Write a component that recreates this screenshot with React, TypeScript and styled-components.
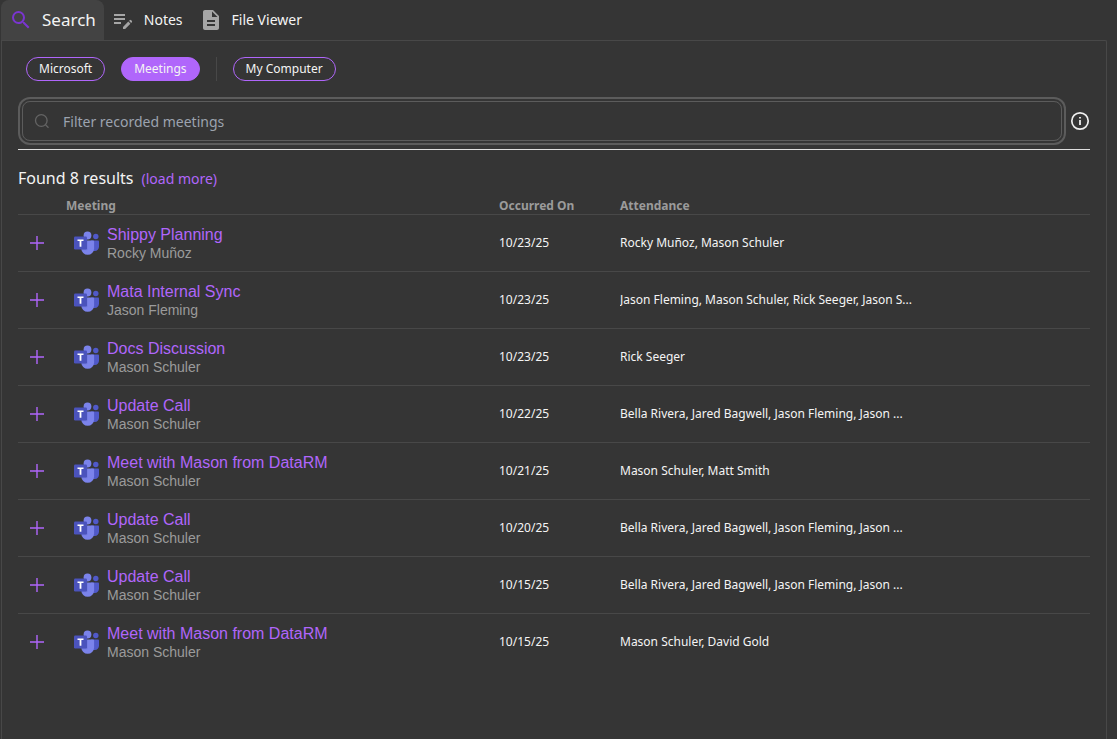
import React from "react";
import styled, { createGlobalStyle } from "styled-components";

const color = {
  page: "#353535",
  tab: "#434343",
  line: "#484848",
  field: "#5c5c5c",
  text: "#f4f4f4",
  muted: "#9b9b9b",
  accent: "#b066fb",
};

const GlobalStyle = createGlobalStyle`
  * { box-sizing: border-box; }
  body {
    margin: 0;
    background: ${color.page};
    color: ${color.text};
    font-family: "Noto Sans", sans-serif;
  }
  button, input { font-family: inherit; }
`;

const Page = styled.div`
  display: flex;
  flex-direction: column;
  min-height: 100vh;
  padding: 0 10px 0 1px;
`;

const TabBar = styled.nav`
  display: flex;
  height: 40px;
`;

const Tab = styled.button<{ $active?: boolean }>`
  display: flex;
  align-items: center;
  gap: 9px;
  padding: 0 8px 1px;
  border: 0;
  border-radius: 8px 8px 0 0;
  background: ${(p) => (p.$active ? color.tab : "transparent")};
  color: ${color.text};
  font-size: ${(p) => (p.$active ? 17 : 14)}px;
  white-space: nowrap;
  cursor: pointer;
`;

const Panel = styled.main`
  flex: 1;
  padding: 16px;
  border: 1px solid ${color.line};
  border-bottom: 0;
  border-top-right-radius: 2px;
`;

const Filters = styled.div`
  display: flex;
  align-items: center;
  gap: 16px;
  padding: 0 8px;
`;

const Pill = styled.button<{ $selected?: boolean }>`
  height: 24px;
  padding: 0 12px;
  border: 1px solid ${color.accent};
  border-radius: 12px;
  background: ${(p) => (p.$selected ? color.accent : "transparent")};
  color: ${color.text};
  font-size: 12px;
  line-height: 16px;
  white-space: nowrap;
  cursor: pointer;
`;

const Divider = styled.span`
  width: 1px;
  height: 24px;
  background: ${color.line};
`;

const SearchRow = styled.div`
  display: flex;
  align-items: center;
  gap: 8px;
  padding: 20px 0 8px 4px;
  border-bottom: 1px solid #dedede;
`;

const SearchField = styled.label`
  display: flex;
  flex: 1;
  align-items: center;
  gap: 13px;
  height: 40px;
  padding: 0 11px;
  border: 1px solid ${color.field};
  border-radius: 8px;
  box-shadow: 0 0 0 2px ${color.page}, 0 0 0 4px ${color.field};
`;

const SearchInput = styled.input`
  flex: 1;
  min-width: 0;
  padding: 2px 0 0;
  border: 0;
  outline: 0;
  background: transparent;
  color: ${color.text};
  font-size: 14px;
  line-height: 20px;
  &::placeholder { color: #9ca3af; opacity: 1; }
`;

const IconButton = styled.button`
  display: flex;
  align-items: center;
  justify-content: center;
  padding: 0;
  border: 0;
  background: transparent;
  color: ${color.text};
  cursor: pointer;
`;

const Summary = styled.div`
  display: flex;
  align-items: baseline;
  gap: 8px;
  padding-top: 16px;
`;

const SummaryTitle = styled.h1`
  margin: 0;
  font-size: 16px;
  font-weight: 400;
  line-height: 24px;
`;

const LoadMore = styled.a`
  color: ${color.accent};
  font-size: 14px;
  line-height: 20px;
  text-decoration: none;
`;

const Table = styled.table`
  width: 100%;
  margin-top: 6px;
  border-collapse: collapse;
  table-layout: fixed;
`;

const Col = styled.col<{ $width?: string }>`
  width: ${(p) => p.$width ?? "auto"};
`;

const HeadCell = styled.th`
  height: 18px;
  padding: 2px 0 0;
  color: ${color.muted};
  font-size: 12px;
  font-weight: 700;
  line-height: 16px;
  text-align: left;
`;

const Row = styled.tr`
  border-top: 1px solid ${color.line};
`;

const Cell = styled.td`
  height: 57px;
  padding: 0;
  font-size: 12px;
  line-height: 16px;
  vertical-align: middle;
`;

const ExpandCell = styled(Cell)`
  padding-left: 12px;
`;

const Meeting = styled.div`
  display: flex;
  align-items: center;
  gap: 8px;
  padding-left: 8px;
  font-family: "Liberation Sans", Arial, sans-serif;
`;

const MeetingText = styled.div`
  padding-top: 2px;
`;

const MeetingTitle = styled.a`
  display: block;
  color: ${color.accent};
  font-size: 16px;
  line-height: 18px;
  text-decoration: none;
`;

const Organizer = styled.div`
  color: ${color.muted};
  font-size: 14px;
  line-height: 18px;
`;

const Attendees = styled.div`
  max-width: 300px;
  overflow: hidden;
  text-overflow: ellipsis;
  white-space: nowrap;
`;

const SearchTabIcon = () => (
  <svg width="24" height="24" viewBox="0 0 24 24" fill="#7a35d0" aria-hidden="true">
    <path d="M15.5 14h-.79l-.28-.27A6.47 6.47 0 0 0 16 9.500 6.500 6.500 0 1 0 9.500 16c1.610 0 3.090-.59 4.230-1.570l.27.28v.79l5 4.990L20.490 19l-4.990-5zm-6 0C7.010 14 5 11.990 5 9.500S7.010 5 9.500 5 14 7.010 14 9.500 11.990 14 9.500 14z" />
  </svg>
);

const NotesIcon = () => (
  <svg width="23" height="24" viewBox="0 0 23 24" fill="#a6a6a6" aria-hidden="true">
    <path d="M2 10h11v2H2v-2zm0-2h11V6H2v2zm0 8h7v-2H2v2zm15.010-3.130.71-.71a.996.996 0 0 1 1.410 0l.71.71c.39.39.39 1.020 0 1.410l-.71.71-2.120-2.120zm-.71.71-5.300 5.300V21h2.120l5.300-5.300-2.120-2.120z" />
  </svg>
);

const FileIcon = () => (
  <svg width="24" height="24" viewBox="0 0 24 24" fill="#a6a6a6" aria-hidden="true">
    <path d="M14 2H6c-1.100 0-1.990.9-1.990 2L4 20c0 1.100.89 2 1.990 2H18c1.100 0 2-.9 2-2V8l-6-6zm2 16H8v-2h8v2zm0-4H8v-2h8v2zm-3-5V3.500L18.500 9H13z" />
  </svg>
);

const FieldIcon = () => (
  <svg width="16" height="16" viewBox="0 0 16 16" fill="none" stroke="#646464" strokeWidth="1.3" aria-hidden="true">
    <circle cx="7.300" cy="7.500" r="5.800" />
    <path d="M11.400 11.600 14.500 14.700" />
  </svg>
);

const InfoIcon = () => (
  <svg width="20" height="20" viewBox="0 0 20 20" aria-hidden="true">
    <circle cx="10" cy="10" r="8.200" fill="none" stroke="#eee" strokeWidth="1.700" />
    <path d="M9.100 6h1.800v1.600H9.100zM9.100 8.900h1.800v5.100H9.100z" fill="#eee" />
  </svg>
);

const PlusIcon = () => (
  <svg width="14" height="14" viewBox="0 0 14 14" fill="none" stroke={color.accent} strokeWidth="1.400" aria-hidden="true">
    <path d="M7 0v14M0 7h14" />
  </svg>
);

const TeamsIcon = () => (
  <svg width="25" height="24" viewBox="0 0 25 24" aria-hidden="true">
    <circle cx="21.800" cy="5.500" r="2.700" fill="#5059c9" />
    <path d="M17 9.500h7.200c.5 0 .8.4.8.8v5.400a4.200 4.200 0 0 1-4.200 4.200h-1A4 4 0 0 1 16 17z" fill="#5059c9" />
    <circle cx="13.500" cy="4.500" r="3.900" fill="#7b83eb" />
    <path d="M8 9.500h11.200c.5 0 .9.400.9.900v7a6.400 6.400 0 0 1-12.800 0v-7c0-.5.3-.9.7-.9z" fill="#7b83eb" />
    <path d="M7.300 9.500h5.500c.4 0 .7.300.7.700v8c0 .5-.5 1-1 1H7.600a7 7 0 0 1-.3-1.800z" fill="#353b8f" opacity=".15" />
    <rect y="5.500" width="13" height="13" rx="1.200" fill="#4b53bc" />
    <path d="M3.500 8.600h6v1.500H7.400v5.700H5.600v-5.700H3.500z" fill="#fff" />
  </svg>
);

const meetings = [
  { title: "Shippy Planning", by: "Rocky Muñoz", date: "10/23/25", people: "Rocky Muñoz, Mason Schuler" },
  { title: "Mata Internal Sync", by: "Jason Fleming", date: "10/23/25", people: "Jason Fleming, Mason Schuler, Rick Seeger, Jason S..." },
  { title: "Docs Discussion", by: "Mason Schuler", date: "10/23/25", people: "Rick Seeger" },
  { title: "Update Call", by: "Mason Schuler", date: "10/22/25", people: "Bella Rivera, Jared Bagwell, Jason Fleming, Jason ..." },
  { title: "Meet with Mason from DataRM", by: "Mason Schuler", date: "10/21/25", people: "Mason Schuler, Matt Smith" },
  { title: "Update Call", by: "Mason Schuler", date: "10/20/25", people: "Bella Rivera, Jared Bagwell, Jason Fleming, Jason ..." },
  { title: "Update Call", by: "Mason Schuler", date: "10/15/25", people: "Bella Rivera, Jared Bagwell, Jason Fleming, Jason ..." },
  { title: "Meet with Mason from DataRM", by: "Mason Schuler", date: "10/15/25", people: "Mason Schuler, David Gold" },
];

export default function App() {
  return (
    <Page>
      <GlobalStyle />
      <TabBar>
        <Tab $active><SearchTabIcon />Search</Tab>
        <Tab><NotesIcon />Notes</Tab>
        <Tab><FileIcon />File Viewer</Tab>
      </TabBar>
      <Panel>
        <Filters>
          <Pill>Microsoft</Pill>
          <Pill $selected aria-pressed="true">Meetings</Pill>
          <Divider />
          <Pill>My Computer</Pill>
        </Filters>
        <SearchRow>
          <SearchField>
            <FieldIcon />
            <SearchInput type="text" placeholder="Filter recorded meetings" aria-label="Filter recorded meetings" />
          </SearchField>
          <IconButton aria-label="Information"><InfoIcon /></IconButton>
        </SearchRow>
        <Summary>
          <SummaryTitle>Found 8 results</SummaryTitle>
          <LoadMore href="#more">(load more)</LoadMore>
        </Summary>
        <Table>
          <colgroup>
            <Col $width="48px" />
            <Col />
            <Col $width="121px" />
            <Col $width="470px" />
          </colgroup>
          <thead>
            <tr>
              <HeadCell aria-label="Expand" />
              <HeadCell>Meeting</HeadCell>
              <HeadCell>Occurred On</HeadCell>
              <HeadCell>Attendance</HeadCell>
            </tr>
          </thead>
          <tbody>
            {meetings.map((m) => (
              <Row key={m.date + m.title}>
                <ExpandCell>
                  <IconButton aria-label={`Expand ${m.title}`}><PlusIcon /></IconButton>
                </ExpandCell>
                <Cell>
                  <Meeting>
                    <TeamsIcon />
                    <MeetingText>
                      <MeetingTitle href="#meeting">{m.title}</MeetingTitle>
                      <Organizer>{m.by}</Organizer>
                    </MeetingText>
                  </Meeting>
                </Cell>
                <Cell>{m.date}</Cell>
                <Cell><Attendees>{m.people}</Attendees></Cell>
              </Row>
            ))}
          </tbody>
        </Table>
      </Panel>
    </Page>
  );
}
